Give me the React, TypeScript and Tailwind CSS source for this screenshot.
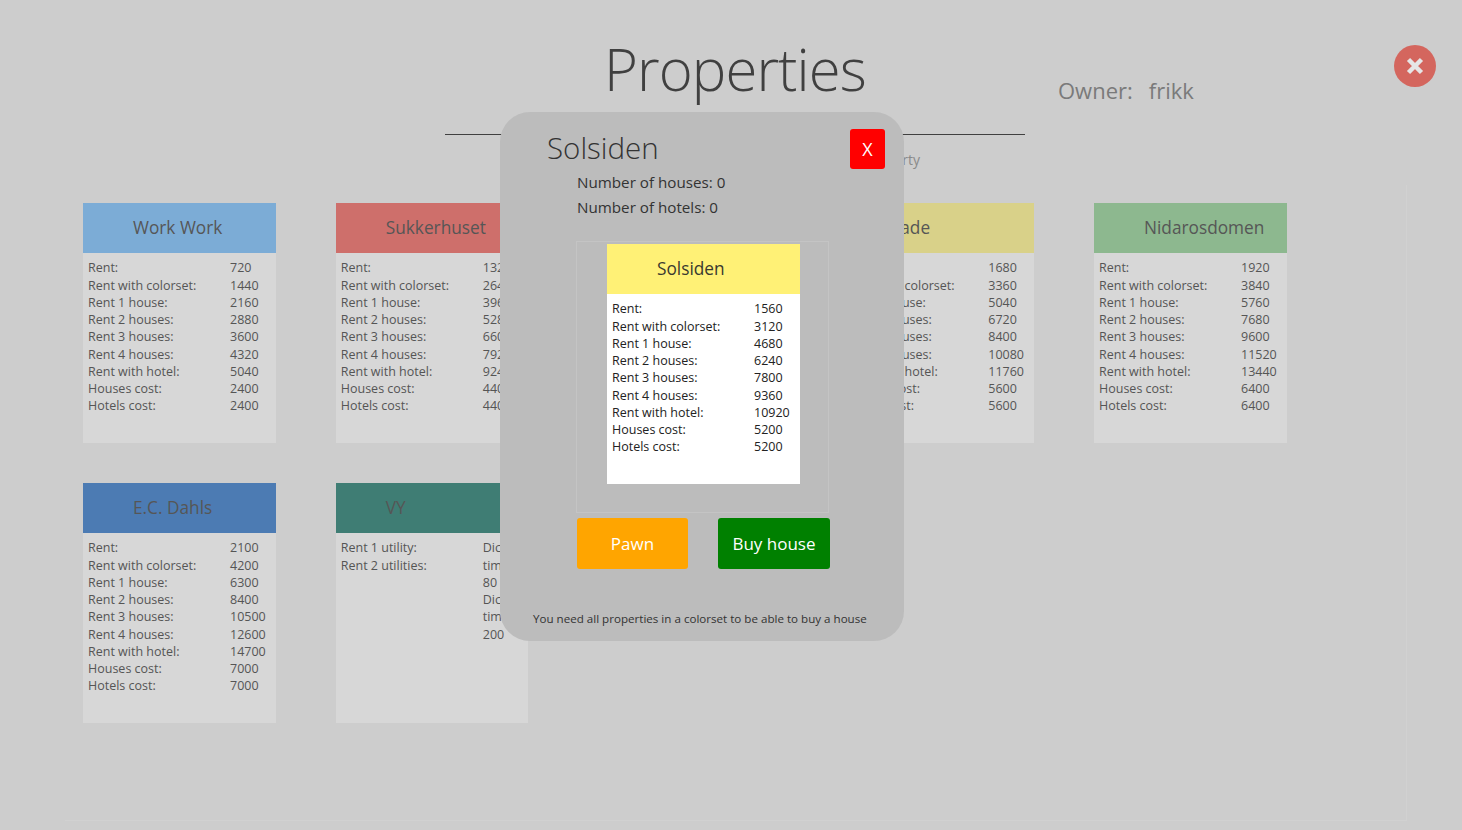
const RENT_LABELS = [
  "Rent:",
  "Rent with colorset:",
  "Rent 1 house:",
  "Rent 2 houses:",
  "Rent 3 houses:",
  "Rent 4 houses:",
  "Rent with hotel:",
  "Houses cost:",
  "Hotels cost:",
];

type Property = {
  name: string;
  header: string;
  labels: string[];
  values: string[];
};

const solsiden: Property = {
  name: "Solsiden",
  header: "bg-[#fff176]",
  labels: RENT_LABELS,
  values: ["1560", "3120", "4680", "6240", "7800", "9360", "10920", "5200", "5200"],
};

const properties: Property[] = [
  { name: "Work Work", header: "bg-[#7cacd6]", labels: RENT_LABELS, values: ["720", "1440", "2160", "2880", "3600", "4320", "5040", "2400", "2400"] },
  { name: "Sukkerhuset", header: "bg-[#ce6f6b]", labels: RENT_LABELS, values: ["1320", "2640", "3960", "5280", "6600", "7920", "9240", "4400", "4400"] },
  { ...solsiden, header: "bg-[#d9d189]" },
  { name: "Lade", header: "bg-[#d9d189]", labels: RENT_LABELS, values: ["1680", "3360", "5040", "6720", "8400", "10080", "11760", "5600", "5600"] },
  { name: "Nidarosdomen", header: "bg-[#8db88f]", labels: RENT_LABELS, values: ["1920", "3840", "5760", "7680", "9600", "11520", "13440", "6400", "6400"] },
  { name: "E.C. Dahls", header: "bg-[#4c7bb3]", labels: RENT_LABELS, values: ["2100", "4200", "6300", "8400", "10500", "12600", "14700", "7000", "7000"] },
  { name: "VY", header: "bg-[#3f7d74]", labels: ["Rent 1 utility:", "Rent 2 utilities:"], values: ["Dice", "times", "80", "Dice", "times", "200"] },
];

function PropertyCard({ property, dimmed }: { property: Property; dimmed: boolean }) {
  return (
    <div className={`h-[240px] w-[192.5px] ${dimmed ? "bg-[#d7d7d7] text-[#555555]" : "bg-white text-[#222222]"}`}>
      <div className={`flex h-[50px] items-center pl-[50px] text-[17.25px] ${property.header} ${dimmed ? "text-[#565656]" : "text-[#3a3a30]"}`}>
        {property.name}
      </div>
      <div className="flex pt-[6.25px] pl-[5px] text-[12.5px] leading-[17.25px]">
        <div className="w-[142px] shrink-0">
          {property.labels.map((label) => (
            <div key={label}>{label}</div>
          ))}
        </div>
        <div>
          {property.values.map((value, i) => (
            <div key={i}>{value}</div>
          ))}
        </div>
      </div>
    </div>
  );
}

export default function App() {
  return (
    <div className="relative h-[830px] w-[1462px] overflow-hidden bg-[#cdcdcd] font-['Open_Sans','Noto_Sans',sans-serif]">
      <header className="flex h-[135px] flex-col">
        <div className="flex h-[134px] items-start">
          <h1 className="ml-[604px] mt-[31px] w-[263px] shrink-0 whitespace-nowrap text-[58px] leading-[76px] font-light tracking-[-0.9px] text-[#404040]">
            Properties
          </h1>
          <div className="ml-[191px] mt-[75px] flex gap-[16px] text-[22px] leading-[30px] text-[#7a7a7a]">
            <span>Owner:</span>
            <span>frikk</span>
          </div>
        </div>
        <div className="ml-[445px] h-px w-[580px] bg-[#404040]" />
      </header>

      <p className="mt-[15px] h-[20px] w-[920px] text-right text-[14px] leading-[20px] text-[#8a8a8a]">
        Click on a card to manage your property
      </p>

      <main className="ml-[65px] mt-[15px] h-[636px] w-[1342px] border-r border-b border-[#d1d1d1] pl-[18px] pt-[18px]">
        <div className="grid grid-cols-[repeat(5,192.5px)] gap-x-[60.25px] gap-y-[40px]">
          {properties.map((property) => (
            <PropertyCard key={property.name} property={property} dimmed />
          ))}
        </div>
      </main>

      <button className="absolute left-[1394px] top-[45px] flex h-[42px] w-[42px] items-center justify-center rounded-full bg-[#d4665e]">
        <svg width="18" height="18" viewBox="0 0 18 18" fill="none">
          <path d="M2.5 2.5L15.5 15.5M15.5 2.5L2.5 15.5" stroke="#e6e6e6" strokeWidth="4.5" />
        </svg>
      </button>

      <section className="absolute left-[500px] top-[112px] h-[529px] w-[404px] rounded-[30px] bg-[#bcbcbc]">
        <div className="flex items-start justify-between pl-[47px] pr-[19px] pt-[16px]">
          <h2 className="text-[29.5px] leading-[40px] font-light text-[#333333]">Solsiden</h2>
          <button className="mt-[1px] h-[40px] w-[35px] rounded-[3px] bg-[#ff0000] text-[18px] text-white">X</button>
        </div>
        <div className="ml-[77px] mt-[1px] text-[15.2px] leading-[25px] text-[#333333]">
          <p>Number of houses: 0</p>
          <p>Number of hotels: 0</p>
        </div>
        <div className="ml-[76px] mt-[21px] h-[272px] w-[253px] border border-[#c4c4c4] pl-[30px] pt-[2px]">
          <PropertyCard property={solsiden} dimmed={false} />
        </div>
        <div className="ml-[77px] mt-[5px] flex gap-[30px]">
          <button className="h-[51px] w-[111px] rounded-[3px] bg-[#ffa500] text-[17px] text-white">Pawn</button>
          <button className="h-[51px] w-[112px] rounded-[3px] bg-[#008000] text-[17px] text-white">Buy house</button>
        </div>
        <p className="mt-[41px] pl-[33px] text-[11.6px] leading-[18px] text-[#333333]">
          You need all properties in a colorset to be able to buy a house
        </p>
      </section>
    </div>
  );
}
